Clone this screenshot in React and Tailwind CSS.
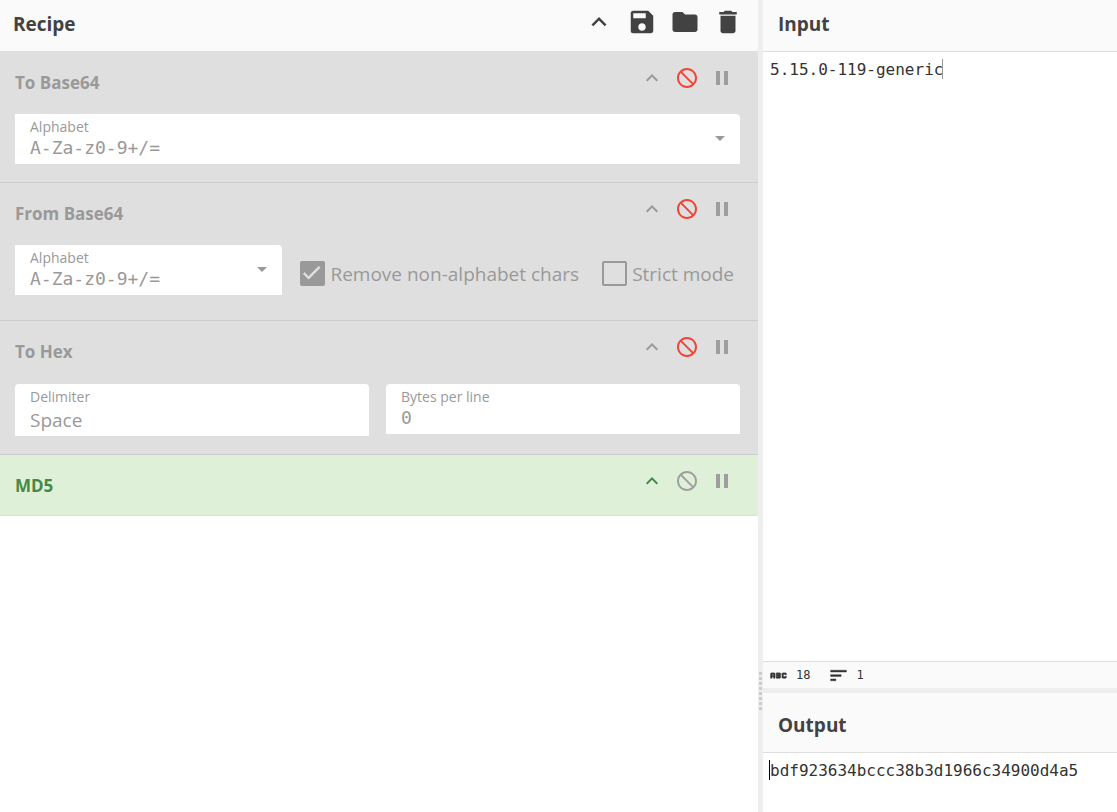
import { useState } from "react";
import {
  MdAbc,
  MdArrowDropDown,
  MdCheck,
  MdDelete,
  MdFolder,
  MdKeyboardArrowUp,
  MdNotInterested,
  MdPause,
  MdSave,
  MdSort,
} from "react-icons/md";

const MONO = "font-['DejaVu_Sans_Mono',monospace]";

function PaneTitle({ children, className = "", actions }) {
  return (
    <header
      className={`flex shrink-0 items-center justify-between border-b border-[#ddd] bg-[#fafafa] ${className}`}
    >
      <h2 className="text-[19px] leading-6 font-bold">{children}</h2>
      {actions}
    </header>
  );
}

function IconButton({ label, icon: Icon, className = "" }) {
  return (
    <button type="button" aria-label={label} title={label} className={`block ${className}`}>
      <Icon className="size-full" />
    </button>
  );
}

function Operation({ name, disabled, className = "", children }) {
  const tone = disabled
    ? "border-[#cdcdcd] bg-[#dfdfdf] text-[#999]"
    : "border-[#d6e9c6] bg-[#dff0d8] text-[#468847]";
  return (
    <li className={`border-b px-[15px] ${tone} ${className}`}>
      <div className="flex items-start justify-between pt-[14px] pr-[9px]">
        <h3 className="pt-[5px] text-[17px] leading-6 font-bold">{name}</h3>
        <div className="flex gap-[11px]">
          <IconButton label="Hide arguments" icon={MdKeyboardArrowUp} className="size-6" />
          <IconButton
            label="Disable operation"
            icon={MdNotInterested}
            className={disabled ? "size-6 text-[#f44336]" : "size-6 text-[#9e9e9e]"}
          />
          <IconButton label="Set breakpoint" icon={MdPause} className="size-6 text-[#9e9e9e]" />
        </div>
      </div>
      {children}
    </li>
  );
}

function Field({ id, label, className = "", children }) {
  return (
    <div className={`min-w-0 bg-white pt-1 pl-[15px] ${className}`}>
      <label htmlFor={id} className="block text-[14px] leading-[18px]">
        {label}
      </label>
      {children}
    </div>
  );
}

function AlphabetField({ id, className = "" }) {
  return (
    <div className={`flex h-[50px] min-w-0 rounded-tr-[4px] bg-white ${className}`}>
      <Field id={id} label="Alphabet" className="flex-1">
        <input
          id={id}
          type="text"
          defaultValue="A-Za-z0-9+/="
          className={`block h-[22px] w-full bg-transparent text-[18px] outline-none ${MONO}`}
        />
      </Field>
      <IconButton label="Choose alphabet" icon={MdArrowDropDown} className="mr-2 mb-[2px] size-6 self-center" />
    </div>
  );
}

function CheckOption({ id, label, defaultChecked = false }) {
  const [checked, setChecked] = useState(defaultChecked);
  return (
    <div className="flex items-center gap-[5px]">
      <span className="relative block size-[25px]">
        <input
          id={id}
          type="checkbox"
          checked={checked}
          onChange={(e) => setChecked(e.target.checked)}
          className="block size-full appearance-none rounded-[2px] border-2 border-[#999] checked:bg-[#999]"
        />
        {checked && (
          <MdCheck className="pointer-events-none absolute inset-0 size-[23px] text-[#dfdfdf] [&>path:last-child]:stroke-[0.7]" />
        )}
      </span>
      <label htmlFor={id} className="text-[19px] leading-6 whitespace-nowrap">
        {label}
      </label>
    </div>
  );
}

function Recipe() {
  return (
    <section className="flex min-h-0 min-w-0 flex-col bg-white">
      <PaneTitle
        className="h-[52px] pr-[15px] pb-1 pl-[13px]"
        actions={
          <div className="flex gap-[13px] pb-[3px]">
            <IconButton label="Collapse all" icon={MdKeyboardArrowUp} className="size-[30px]" />
            <IconButton label="Save recipe" icon={MdSave} className="size-[30px]" />
            <IconButton label="Load recipe" icon={MdFolder} className="size-[30px]" />
            <IconButton label="Clear recipe" icon={MdDelete} className="size-[30px]" />
          </div>
        }
      >
        Recipe
      </PaneTitle>
      <ul>
        <Operation name="To Base64" disabled className="pb-[18px]">
          <AlphabetField id="to-alphabet" className="mt-[19px] mr-[3px]" />
        </Operation>
        <Operation name="From Base64" disabled className="pb-[25px]">
          <div className="mt-[19px] flex items-center">
            <AlphabetField id="from-alphabet" className="mr-[18px] flex-1" />
            <div className="flex gap-[23px] pt-[7px] pr-[9px]">
              <CheckOption id="remove-chars" label="Remove non-alphabet chars" defaultChecked />
              <CheckOption id="strict" label="Strict mode" />
            </div>
          </div>
        </Operation>
        <Operation name="To Hex" disabled className="pb-[18px]">
          <div className="mt-5 mr-[3px] grid grid-cols-2 items-start gap-[17px]">
            <Field id="delimiter" label="Delimiter" className="h-[52px] rounded-t-[4px]">
              <select
                id="delimiter"
                className="block h-7 w-full appearance-none bg-transparent text-[19px] outline-none"
              >
                <option>Space</option>
              </select>
            </Field>
            <Field id="bytes" label="Bytes per line" className="h-[50px] rounded-t-[4px]">
              <input
                id="bytes"
                type="number"
                defaultValue="0"
                className={`block h-[22px] w-full bg-transparent text-[18px] outline-none ${MONO}`}
              />
            </Field>
          </div>
        </Operation>
        <Operation name="MD5" className="pb-[17px]" />
      </ul>
    </section>
  );
}

function Editor({ label, value, readOnly, caret }) {
  return (
    <div className="relative min-h-0 flex-1 bg-white">
      <textarea
        aria-label={label}
        defaultValue={value}
        readOnly={readOnly}
        spellCheck={false}
        className={`block size-full resize-none overflow-hidden bg-transparent py-[6px] pl-[7px] text-[16px] leading-6 text-[#333] outline-none ${MONO}`}
      />
      <span className={`absolute top-[7px] h-5 w-px ${caret}`} />
    </div>
  );
}

export default function App() {
  return (
    <main className="grid h-screen grid-cols-[758fr_5px_354fr] grid-rows-1 bg-[#eee] font-['Open_Sans','Noto_Sans',sans-serif] text-[#424242]">
      <Recipe />
      <div className="flex items-end justify-center pb-[102px]">
        <div className="flex flex-col gap-[2px]">
          {Array.from({ length: 8 }, (_, i) => (
            <span key={i} className="h-[3px] w-[3px] bg-[#ccc]" />
          ))}
        </div>
      </div>
      <div className="grid min-h-0 min-w-0 grid-rows-[688fr_5px_119fr]">
        <section className="flex min-h-0 flex-col">
          <PaneTitle className="h-[52px] pb-1 pl-[15px]">Input</PaneTitle>
          <Editor label="Input" value="5.15.0-119-generic" caret="left-[179px] bg-[#999]" />
          <footer
            className={`flex h-[27px] shrink-0 items-center border-t border-[#ddd] bg-[#fafafa] pl-[5px] text-[12px] text-[#333] ${MONO}`}
          >
            <MdAbc className="mr-[7px] size-[21px] [&>path:last-child]:stroke-[0.7]" />
            <span className="mr-[18px]">18</span>
            <MdSort className="mr-[7px] size-[21px] [&>path:last-child]:stroke-[0.5]" />
            <span>1</span>
          </footer>
        </section>
        <div />
        <section className="flex min-h-0 flex-col">
          <PaneTitle className="h-[60px] pt-[5px] pl-[15px]">Output</PaneTitle>
          <Editor
            label="Output"
            value="bdf923634bccc38b3d1966c34900d4a5"
            readOnly
            caret="left-[6px] bg-black"
          />
        </section>
      </div>
    </main>
  );
}
